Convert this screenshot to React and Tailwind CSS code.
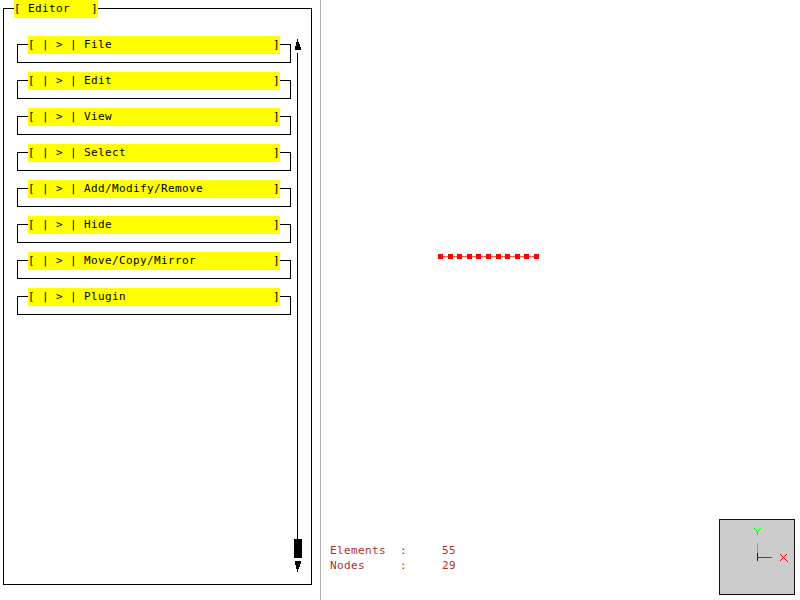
const menus = ['File', 'Edit', 'View', 'Select', 'Add/Modify/Remove', 'Hide', 'Move/Copy/Mirror', 'Plugin'];

const nodes = [8, 18, 27, 37, 46, 56, 66, 75, 85, 94, 104];

function Label({ children }) {
  return <span className="block h-[18px] whitespace-pre bg-[#ffff00] leading-[18px]">{children}</span>;
}

function MenuRow({ name }) {
  return (
    <div className="mb-[17px] h-[19px] w-[274px] border border-black pl-[10px]">
      <div className="-mt-[9px] w-[252px]">
        <Label>{`[ | > | ${name}`.padEnd(35) + ']'}</Label>
      </div>
    </div>
  );
}

function ScrollBar() {
  return (
    <svg className="mt-[30px] ml-[3px] block h-[534px] w-[8px] shrink-0" viewBox="0 0 8 534" shapeRendering="crispEdges">
      <path d="M3 0h1v3h1v2h1v3h1v3h-6v-4h1v-4h1z" />
      <path d="M3 14h1v486h-1z" />
      <path d="M0 500h8v19h-8z" />
      <path d="M1 522h6v3h-1v3h-1v2h-1v3h-1v-3h-1v-4h-1z" />
    </svg>
  );
}

function AxisCube() {
  return (
    <div className="mr-[5px] mb-[5px] h-[76px] w-[76px] border border-[#111] bg-[#cccccc]">
      <svg className="block" width="74" height="74" viewBox="0 0 74 74" fill="none" shapeRendering="crispEdges">
        <path d="M37.5 23v10" stroke="#00ff00" />
        <path d="M37.5 33v8" stroke="#0000ff" />
        <path d="M38 37.5h14" stroke="#ff0000" />
        <path d="M34 8.5h1m0 1h1m0 1h1m0 1h1m0 -1h1m0 -1h1m0 -1h1M37.5 11v4" stroke="#00ff00" />
        <path d="M60 34.5h1m0 1h1m0 1h1m0 1h1m0 1h1m0 1h1m0 1h1m0 1h1M66 34.5h1m-2 1h1m-2 1h1m-2 1h1m-2 1h1m-2 1h1m-2 1h1" stroke="#ff0000" />
      </svg>
    </div>
  );
}

export default function App() {
  return (
    <div className="flex h-[600px] w-[800px] overflow-hidden bg-white font-['DejaVu_Sans_Mono',monospace] text-[11px] tracking-[0.378px] text-black">
      <aside className="h-[600px] w-[321px] shrink-0 border-r border-[#b0b0b0] pt-[8px] pl-[3px]">
        <section className="flex h-[577px] w-[309px] border border-black">
          <div className="w-[287px] shrink-0">
            <div className="-mt-[9px] ml-[10px] w-[84px]">
              <Label>{'[ Editor   ]'}</Label>
            </div>
            <div className="mt-[26px] ml-[13px]">
              {menus.map((name) => <MenuRow key={name} name={name} />)}
            </div>
          </div>
          <ScrollBar />
        </section>
      </aside>
      <main className="flex min-w-0 flex-1 flex-col justify-between">
        <svg className="mt-[245px] ml-[109px] block" width="120" height="24" shapeRendering="crispEdges">
          <path d="M10 11.5h96" stroke="#f25c50" />
          <path d="M10 12.5h96" stroke="#ffd0cc" />
          {nodes.map((x) => <rect key={x} x={x} y="9" width="5" height="5" fill="#ff0000" />)}
        </svg>
        <div className="flex items-end justify-between">
          <div className="mb-[27px] ml-[9px] whitespace-pre leading-[15px] text-[#b22c2c]">
            <div>{'Elements  :     55'}</div>
            <div>{'Nodes     :     29'}</div>
          </div>
          <AxisCube />
        </div>
      </main>
    </div>
  );
}
